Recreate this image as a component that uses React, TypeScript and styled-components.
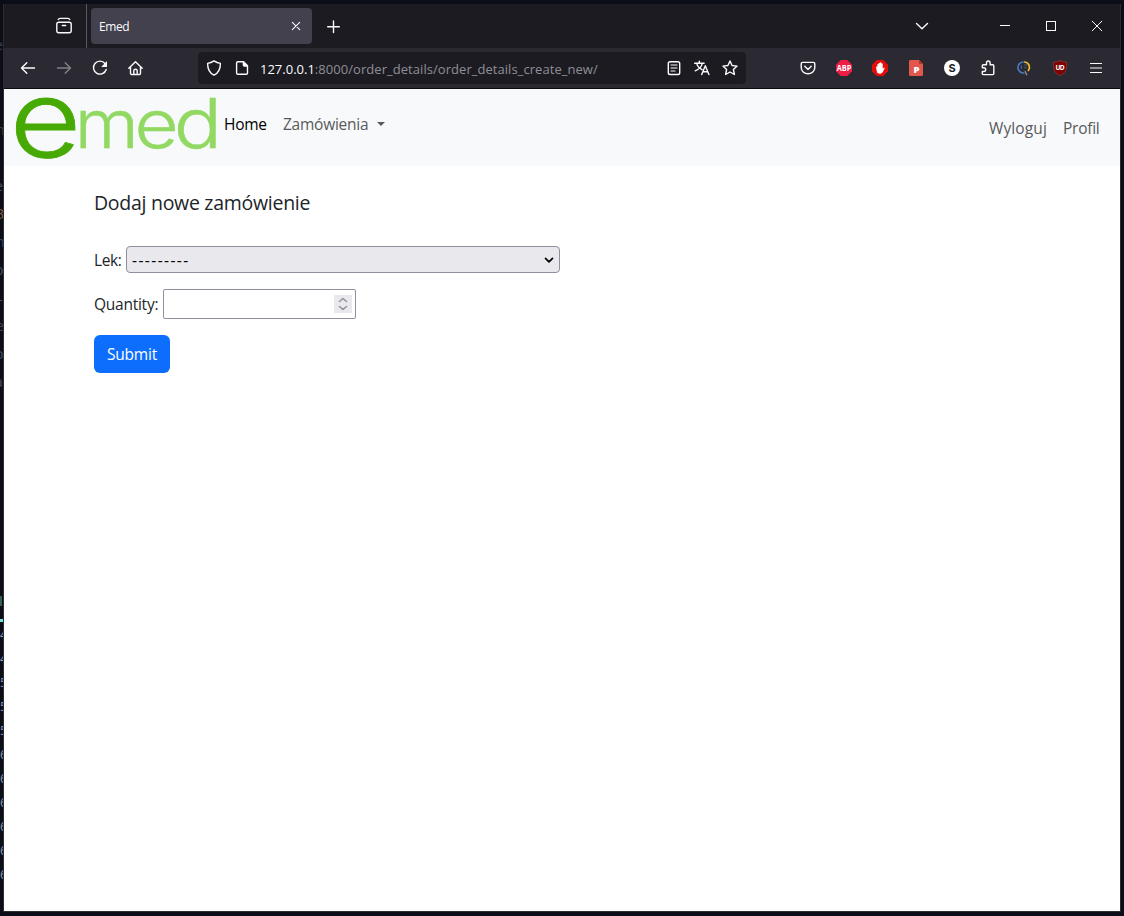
import React from "react";
import styled, { createGlobalStyle } from "styled-components";

const Global = createGlobalStyle`
  * { box-sizing: border-box; }
  body { margin: 0; background: #0d0f18; font-family: "Open Sans", "Noto Sans", sans-serif; }
`;

const Desktop = styled.div`
  position: relative;
  width: 1124px;
  height: 916px;
  padding: 4px 3px;
  overflow: hidden;
  background: #0c0e17;
`;

const Peek = styled.span<{ $y: number; $x: number; $color: string; $size?: number }>`
  position: absolute;
  left: ${(p) => p.$x}px;
  top: ${(p) => p.$y - 10}px;
  color: ${(p) => p.$color};
  font: ${(p) => p.$size ?? 14}px/20px "Open Sans", sans-serif;
`;

const Marker = styled.i<{ $y: number; $x: number; $h: number; $color: string }>`
  position: absolute;
  left: ${(p) => p.$x}px;
  top: ${(p) => p.$y}px;
  width: 3px;
  height: ${(p) => p.$h}px;
  background: ${(p) => p.$color};
`;

const Window = styled.div`
  position: relative;
  display: flex;
  flex-direction: column;
  width: 1118px;
  height: 908px;
  border: solid #2d2c31;
  border-width: 0 1px 1px;
  background: #fff;
`;

const TabBar = styled.div`
  display: flex;
  height: 44px;
  flex: none;
  background: #1c1b22;
  color: #fbfbfe;
`;

const RecentArea = styled.div`
  display: flex;
  align-items: center;
  width: 83px;
  padding-left: 50px;
  border-right: 1px solid #5a5960;
`;

const Tab = styled.div`
  display: flex;
  align-items: center;
  justify-content: space-between;
  width: 221px;
  height: 36px;
  margin: 4px 12px 0 4px;
  padding: 0 8px;
  border-radius: 4px;
  background: #42414d;
  font-size: 12px;
  line-height: 16px;
`;

const TabTitle = styled.span`
  letter-spacing: -0.4px;
  padding-top: 2px;
`;

const NewTab = styled.div`
  display: flex;
  align-items: center;
  padding-top: 1px;
`;

const WindowControls = styled.div`
  display: flex;
  align-items: center;
  margin-left: auto;
  padding-right: 15px;
  gap: 30px;
`;

const ListTabs = styled.div`
  display: flex;
  margin-right: 37px;
`;

const Toolbar = styled.div`
  display: flex;
  align-items: center;
  flex: none;
  height: 41px;
  padding: 0 16px;
  border-bottom: 1px solid #0c0c0d;
  background: #2b2a33;
  color: #fbfbfe;
`;

const NavButtons = styled.div`
  display: flex;
  gap: 20px;
  width: 178px;
`;

const AddressBar = styled.div`
  display: flex;
  align-items: center;
  width: 548px;
  height: 32px;
  padding: 0 8px;
  border-radius: 4px;
  background: #1c1b22;
`;

const SiteIcons = styled.div`
  display: flex;
  gap: 12px;
  margin-right: 10px;
`;

const Url = styled.div`
  flex: 1;
  font-size: 13px;
  line-height: 18px;
  letter-spacing: 0.05px;
  white-space: nowrap;
  color: #8f8f98;
  padding-top: 1px;
`;

const Host = styled.span`
  color: #fbfbfe;
  letter-spacing: 0;
`;

const PageActions = styled.div`
  display: flex;
  gap: 12px;
`;

const Extensions = styled.div`
  display: flex;
  gap: 20px;
  margin-left: auto;
`;

const Navbar = styled.nav`
  display: flex;
  flex: none;
  height: 77px;
  padding: 8px 20px 8px 12px;
  background: #f8f9fa;
`;

const NavLink = styled.a<{ $active?: boolean; $w: number; $spacing?: number }>`
  display: flex;
  align-items: center;
  width: ${(p) => p.$w}px;
  font-size: 15.5px;
  line-height: 24px;
  letter-spacing: ${(p) => p.$spacing ?? 0}px;
  white-space: nowrap;
  color: ${(p) => (p.$active ? "#000" : "#595a5b")};
`;

const MainLinks = styled.div`
  display: flex;
  align-items: flex-start;
  gap: 16px;
  padding: 15px 0 0 8px;
`;

const UserLinks = styled.div`
  display: flex;
  align-items: flex-start;
  gap: 16px;
  margin-left: auto;
  padding-top: 19px;
`;

const Caret = styled.i`
  margin-left: 9px;
  border: solid transparent;
  border-width: 4.5px 4.5px 0;
  border-top-color: #595a5b;
`;

const Content = styled.main`
  display: flex;
  flex-direction: column;
  align-items: flex-start;
  padding: 25px 90px 0;
  color: #212529;
`;

const Title = styled.h5`
  margin: 0 0 31px;
  font-size: 19.5px;
  line-height: 24px;
  font-weight: 400;
  letter-spacing: -0.28px;
  white-space: nowrap;
`;

const Field = styled.label`
  display: flex;
  align-items: center;
  margin-bottom: 16px;
  font-size: 15.5px;
  line-height: 24px;
  white-space: nowrap;
`;

const FieldLabel = styled.span<{ $w: number; $spacing: number }>`
  width: ${(p) => p.$w}px;
  letter-spacing: ${(p) => p.$spacing}px;
`;

const SelectBox = styled.div`
  display: flex;
  align-items: center;
  justify-content: space-between;
  width: 434px;
  height: 27px;
  padding: 0 5px;
  border: 1px solid #8f8f9d;
  border-radius: 4px;
  background: #e9e9ed;
  color: #000;
  letter-spacing: 1.42px;
`;

const NumberBox = styled.div`
  display: flex;
  align-items: center;
  justify-content: flex-end;
  width: 193px;
  height: 30px;
  padding-right: 3px;
  border: 1px solid #8f8f9d;
  border-radius: 2px;
  background: #fff;
`;

const Spinner = styled.div`
  display: flex;
  width: 18px;
  height: 18px;
  background: #e9e9ed;
`;

const Submit = styled.button`
  width: 76px;
  height: 38px;
  padding: 0;
  border: 0;
  border-radius: 6px;
  background: #0d6efd;
  color: #fff;
  font: 15.5px/24px "Open Sans", sans-serif;
  letter-spacing: -0.2px;
`;

const Glyph = styled.svg<{ $dim?: boolean }>`
  display: block;
  flex: none;
  overflow: visible;
  fill: none;
  stroke: currentColor;
  stroke-width: 1.4;
  stroke-linecap: round;
  stroke-linejoin: round;
  opacity: ${(p) => (p.$dim ? 0.42 : 1)};
`;

function Icon({ children, size = 16, dim }: { children: React.ReactNode; size?: number; dim?: boolean }) {
  return (
    <Glyph width={size} height={size} viewBox={`0 0 ${size} ${size}`} $dim={dim}>
      {children}
    </Glyph>
  );
}

const peeks = [
  { t: "e", y: 45, x: -5, c: "#3a4256" },
  { t: "n", y: 130, x: -4, c: "#4f3c36" },
  { t: "e", y: 186, x: -5, c: "#485064" },
  { t: "3", y: 214, x: -4, c: "#8a5f45" },
  { t: "n", y: 242, x: -4, c: "#2c4a78" },
  { t: "o", y: 270, x: -5, c: "#485064" },
  { t: "-", y: 300, x: -2, c: "#485064" },
  { t: "e", y: 326, x: -4, c: "#4b4450" },
  { t: "o", y: 354, x: -5, c: "#485064" },
  { t: "a", y: 382, x: -5, c: "#485064" },
];
const lineDigits = ["4", "4", "5", "5", "5", "6", "6", "6", "6", "6", "6"];

function Logo() {
  return (
    <svg width="200" height="61" viewBox="0 0 200 61" overflow="visible" fontFamily="Inter, sans-serif" fontWeight="300">
      <text transform="translate(-6.4 59.7) scale(1.16 1)" fontSize="107" fill="#47aa04" stroke="#47aa04" strokeWidth="0.8">e</text>
      <g fontSize="68" fill="#91d963" stroke="#91d963" strokeWidth="0.5">
        <text transform="translate(58.8 50.5) scale(1.08 1)">m</text>
        <text transform="translate(118.5 50.5) scale(1.12 1)">e</text>
        <text transform="translate(157.8 50.5) scale(1.18 1.01)">d</text>
      </g>
    </svg>
  );
}

export default function App() {
  return (
    <Desktop>
      <Global />
      {peeks.map((p) => (
        <Peek key={p.y} $x={p.x} $y={p.y} $color={p.c}>{p.t}</Peek>
      ))}
      {lineDigits.map((d, i) => (
        <Peek key={i} $x={0} $y={634 + i * 24} $color="#8298b4" $size={13}>{d}</Peek>
      ))}
      <Marker $x={-1} $y={596} $h={10} $color="#38604f" />
      <Marker $x={0} $y={619} $h={3} $color="#73dde0" />
      <Window>
        <TabBar>
          <RecentArea>
            <Icon size={20}>
              <rect x="2.8" y="6.2" width="14.4" height="10.6" rx="2" />
              <path d="M4.3 3.5q.5-1.1 1.7-1.1h8q1.2 0 1.7 1.1M8.3 9.5h3.4" />
            </Icon>
          </RecentArea>
          <Tab>
            <TabTitle>Emed</TabTitle>
            <Icon><path strokeWidth="1.1" d="m4.3 4.3 7.4 7.4m0-7.4-7.4 7.4" /></Icon>
          </Tab>
          <NewTab>
            <Icon size={20}><path d="M9.5 4v11.5M3.7 9.7h11.6" /></Icon>
          </NewTab>
          <WindowControls>
            <ListTabs><Icon><path d="m2.5 5.5 5.5 5.2 5.5-5.2" /></Icon></ListTabs>
            <Icon><path shapeRendering="crispEdges" strokeWidth="1" strokeLinecap="butt" d="M3 7.5h10" /></Icon>
            <Icon><rect x="3.5" y="3.5" width="9" height="9" strokeWidth="1" strokeLinejoin="miter" /></Icon>
            <Icon><path strokeWidth="1" d="m3.2 3.2 9.6 9.6m0-9.6-9.6 9.6" /></Icon>
          </WindowControls>
        </TabBar>
        <Toolbar>
          <NavButtons>
            <Icon><path d="M14.5 8h-13M6.8 2.8 1.5 8l5.3 5.2" /></Icon>
            <Icon dim><path d="M1.5 8h13M9.2 2.8 14.5 8l-5.3 5.2" /></Icon>
            <Icon>
              <path d="M13 3.5A6.5 6.5 0 1 0 14.2 9.5" />
              <path fill="currentColor" stroke="none" d="M15 1v5.5q0 .5-.5.5H9.2z" />
            </Icon>
            <Icon><path d="M.8 8.2 7.5 1.7l6.7 6.5M2.5 7v6.3q0 1.2 1.2 1.2h7.6q1.2 0 1.2-1.2V7M5.8 14.3v-3.5q0-1.5 1.7-1.5t1.7 1.5v3.5" /></Icon>
          </NavButtons>
          <AddressBar>
            <SiteIcons>
              <Icon><path d="M8 .9Q11 3 14.4 3.4C14.4 8.5 13 12.7 8 15.2 3 12.7 1.6 8.5 1.6 3.4Q5 3 8 .9z" /></Icon>
              <Icon>
                <path d="M3.8 1.8h5.7l4 4v7.2q0 1.3-1.3 1.3H3.8q-1.2 0-1.2-1.3V3.1q0-1.3 1.2-1.3z" />
                <path fill="currentColor" d="M9.4 2v3q0 1 1 1h3z" />
              </Icon>
            </SiteIcons>
            <Url><Host>127.0.0.1</Host>:8000/order_details/order_details_create_new/</Url>
            <PageActions>
              <Icon><rect x="2.3" y="1.7" width="11.4" height="12.8" rx="1.8" /><path strokeWidth="1.2" d="M5 5h6M5 8h6M5 11h4" /></Icon>
              <Icon><path d="M.7 3.2h9.4M5.3 1.2v2M8.3 3.4C7.7 6 5 9.4 1.2 10.8M2.8 3.4C3.3 6 5.4 8.2 8 9.6M7.7 14.5l3.6-8.8 3.6 8.8M8.9 11.8h4.9" /></Icon>
              <Icon><path d="m8 1 2.1 4.5 5 .6-3.7 3.4 1 5L8 12l-4.4 2.5 1-5L.9 6.1l5-.6z" /></Icon>
            </PageActions>
          </AddressBar>
          <Extensions>
            <Icon><path d="M2.5 2.4h11q1.3 0 1.3 1.3v3.8a6.8 6.3 0 0 1-13.6 0V3.7q0-1.3 1.3-1.3zM4.8 6.3 8 9.4l3.2-3.1" /></Icon>
            <Icon>
              <path fill="#ef1c45" stroke="none" d="M4.7 0h6.6L16 4.7v6.6L11.3 16H4.7L0 11.3V4.7z" />
              <text x="8" y="11" fill="#fff" stroke="none" textAnchor="middle" fontSize="8.2" fontWeight="700" fontFamily="Open Sans" textLength="14.6" lengthAdjust="spacingAndGlyphs">ABP</text>
            </Icon>
            <Icon>
              <path fill="#e30d0d" stroke="none" d="M4.7 0h6.6L16 4.7v6.6L11.3 16H4.7L0 11.3V4.7z" />
              <path fill="#fff" stroke="none" d="M5.3 9V4.5q.7-1 1.3 0V3.2q.7-1 1.4 0v-.5q.7-1 1.4 0v1q.8-.8 1.3 0v5l1.3-1.2q1 0 .5 1L10.8 12q-1 1.7-2.7 1.7c-2 0-3-.7-3.3-2.5L4 7q.5-1.1 1.3 0z" />
            </Icon>
            <Icon>
              <path fill="#e2574c" stroke="none" d="M1 1.3Q1 0 2.3 0H11l4 4v10.7q0 1.3-1.3 1.3H2.3Q1 16 1 14.7z" />
              <path fill="#b53629" stroke="none" d="M11 0v4h4z" />
              <text x="8.4" y="13" fill="#fff" stroke="none" textAnchor="middle" fontSize="9.5" fontWeight="800" fontFamily="Open Sans">P</text>
            </Icon>
            <Icon>
              <circle cx="8" cy="8" r="8" fill="#fff" stroke="none" />
              <text x="8" y="12" fill="#222128" stroke="none" textAnchor="middle" fontSize="11" fontWeight="700" fontFamily="Inter">S</text>
            </Icon>
            <Icon><path d="M2.3 7V5.8q0-1 1-1h3.2V3q0-2 1.8-2t1.8 2v1.8h2.7q1 0 1 1v7.8q0 1-1 1H3.3q-1 0-1-1v-2.1h1.5q1.9 0 1.9-1.9T3.8 7.7H2.3z" /></Icon>
            <Icon>
              <path stroke="#4878bf" strokeWidth="1.7" d="M7 2a5.5 5.5 0 0 0 .8 11" />
              <path stroke="#f3c12f" strokeWidth="1.7" d="M8.8 2a5.3 5.3 0 0 1 3.6 8.4" />
              <path stroke="#4b4d58" strokeWidth="1.2" d="M8.5 5.2h2M8.5 7.6h2" />
              <path stroke="#8a8c96" d="M9.2 11.5l1.5 3.3" />
              <path stroke="#32669e" d="M5.4 6v2.3" />
            </Icon>
            <Icon>
              <path fill="#800000" stroke="#ab4848" strokeWidth=".5" d="M8 .5q3 1.8 6.6 1.8C14.8 8 14.5 12.7 8 15.6 1.5 12.7 1.2 8 1.4 2.3Q5 2.3 8 .5z" />
              <text x="8" y="9.8" fill="#fff" stroke="none" textAnchor="middle" fontSize="6.5" fontWeight="700" fontFamily="Open Sans" textLength="9">UD</text>
            </Icon>
            <Icon><path strokeWidth="1.2" d="M2.5 3.5h11M2.5 8h11M2.5 12.5h11" /></Icon>
          </Extensions>
        </Toolbar>
        <Navbar>
          <Logo />
          <MainLinks>
            <NavLink $active $w={43} $spacing={-0.3}>Home</NavLink>
            <NavLink $w={103} $spacing={-0.25}>Zamówienia<Caret /></NavLink>
          </MainLinks>
          <UserLinks>
            <NavLink $w={58} $spacing={0.12}>Wyloguj</NavLink>
            <NavLink $w={37} $spacing={-0.25}>Profil</NavLink>
          </UserLinks>
        </Navbar>
        <Content>
          <Title>Dodaj nowe zamówienie</Title>
          <Field>
            <FieldLabel $w={32} $spacing={-0.4}>Lek:</FieldLabel>
            <SelectBox>
              <span>---------</span>
              <Icon size={10}><path stroke="#000" strokeWidth="1.7" d="m1.5 3.3 3.5 3.5 3.5-3.5" /></Icon>
            </SelectBox>
          </Field>
          <Field>
            <FieldLabel $w={69} $spacing={-0.25}>Quantity:</FieldLabel>
            <NumberBox>
              <Spinner>
                <Icon size={18}><path stroke="#8f8f9d" strokeWidth="1.5" d="m5.5 6.5 3.5-3 3.5 3M5.5 11.5l3.5 3 3.5-3" /></Icon>
              </Spinner>
            </NumberBox>
          </Field>
          <Submit>Submit</Submit>
        </Content>
      </Window>
    </Desktop>
  );
}
